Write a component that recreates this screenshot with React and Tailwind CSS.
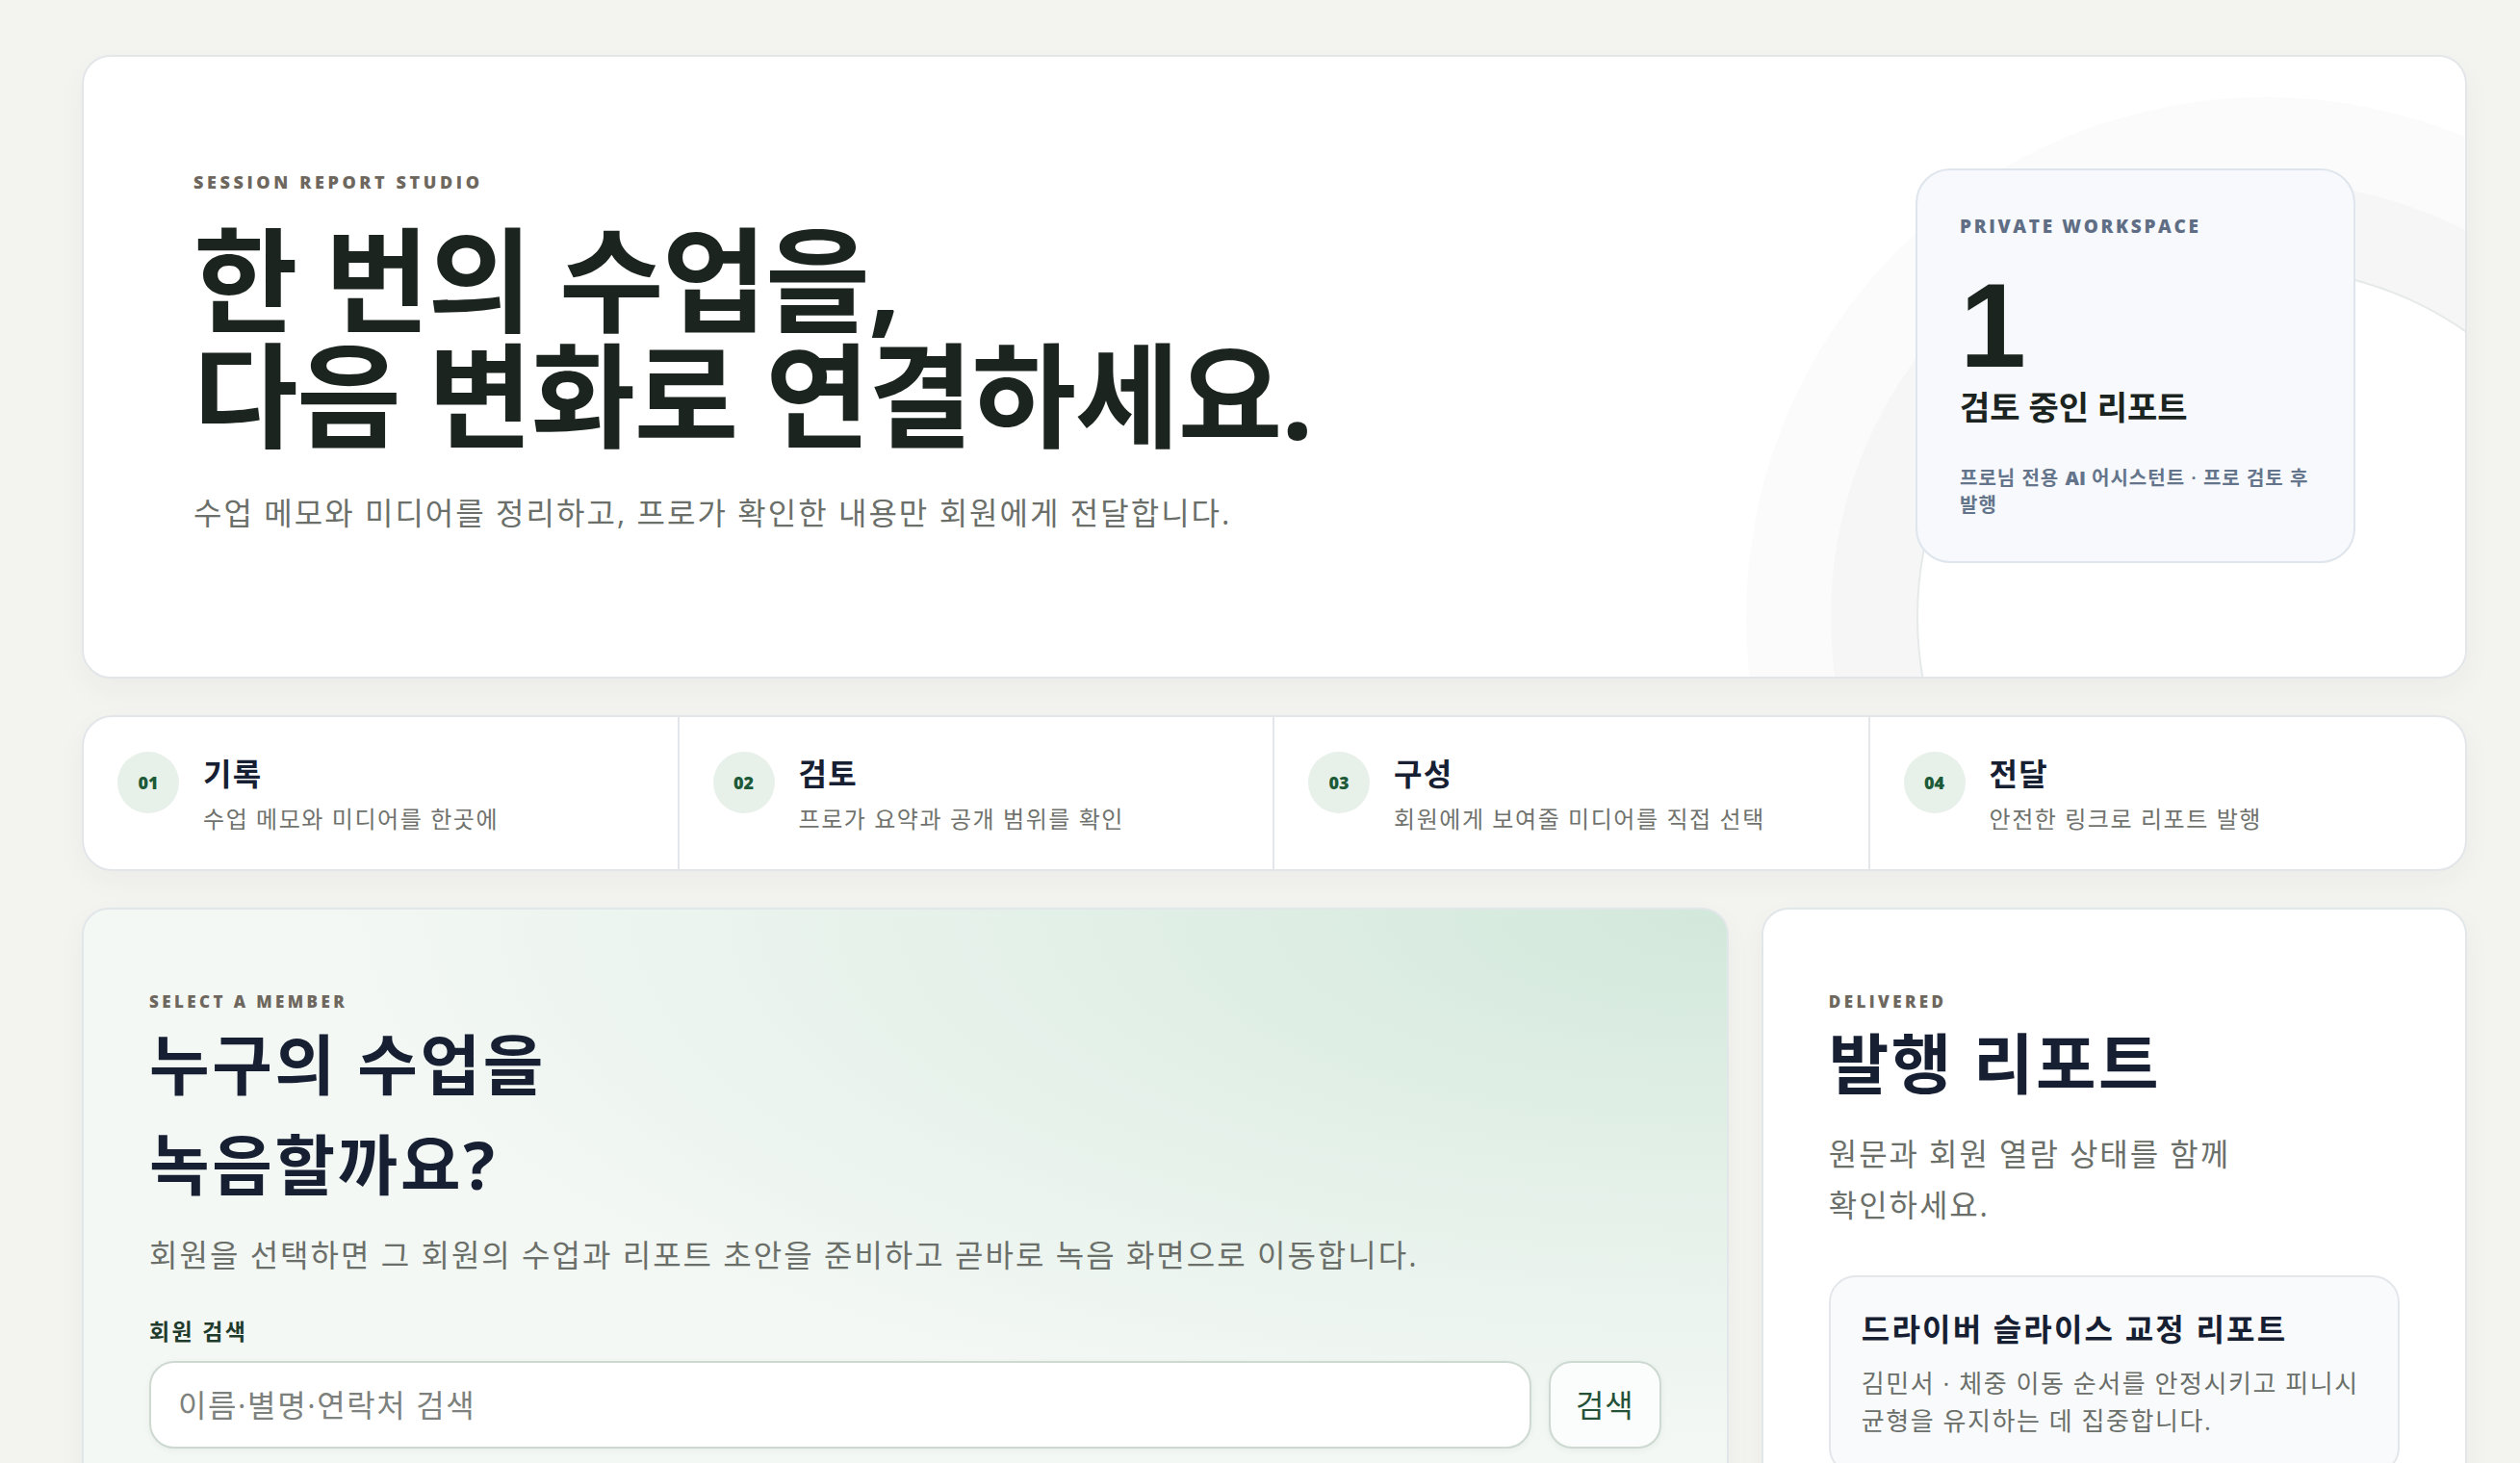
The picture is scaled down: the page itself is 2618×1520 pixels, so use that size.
import React from "react"

const steps = [
  { no: "01", title: "기록", desc: "수업 메모와 미디어를 한곳에" },
  { no: "02", title: "검토", desc: "프로가 요약과 공개 범위를 확인" },
  { no: "03", title: "구성", desc: "회원에게 보여줄 미디어를 직접 선택" },
  { no: "04", title: "전달", desc: "안전한 링크로 리포트 발행" },
]

function Eyebrow({ children, className = "" }) {
  return <p className={`font-extrabold uppercase ${className}`}>{children}</p>
}

function Hero() {
  return (
    <section className="relative overflow-hidden rounded-[30px] border-2 border-[#e3e6e9] bg-white shadow-[0_12px_30px_rgba(40,50,40,0.04)]">
      {/* background rings */}
      <div className="absolute left-[1727px] top-[42px] flex h-[1080px] w-[1080px] items-center justify-center rounded-full bg-[#fafbfa]">
        <div className="flex h-[904px] w-[904px] items-center justify-center rounded-full bg-[#f5f6f5]">
          <div className="h-[726px] w-[726px] rounded-full border-2 border-[#e6e9ea] bg-white" />
        </div>
      </div>

      <div className="relative flex items-start justify-between px-[114px] pb-[118px] pt-[116px]">
        <div>
          <Eyebrow className="text-[18px] leading-[28px] tracking-[0.2em] text-[#6e675e]">Session Report Studio</Eyebrow>
          <h1 className="mt-[28px] text-[118px] font-bold leading-[120px] tracking-[-0.012em] text-[#1b241e]">
            한 번의 수업을,
            <br />
            다음 변화로 연결하세요.
          </h1>
          <p className="mt-[36px] text-[32px] leading-[52px] tracking-[0.063em] text-[#6b6f6a]">
            수업 메모와 미디어를 정리하고, 프로가 확인한 내용만 회원에게 전달합니다.
          </p>
        </div>

        <aside className="w-[457px] rounded-[36px] border-2 border-[#dfe5ec] bg-[#f7f9fc] px-[44px] py-[44px]">
          <Eyebrow className="text-[19px] leading-[28px] tracking-[0.14em] text-[#5f6e85]">Private Workspace</Eyebrow>
          <div className="mt-[27px] font-['Liberation_Sans',Arial,sans-serif] text-[124px] font-bold leading-none text-[#1b241e]">
            1
          </div>
          <div className="text-[34px] font-semibold leading-[46px] tracking-normal text-[#1b2420]">검토 중인 리포트</div>
          <p className="mt-[37px] text-[20px] font-semibold leading-[28px] tracking-[0.05em] text-[#64748b]">
            프로님 전용 <span className="font-extrabold tracking-normal">AI</span> 어시스턴트 · 프로 검토 후 발행
          </p>
        </aside>
      </div>
    </section>
  )
}

function Steps() {
  return (
    <section className="mt-[38px] grid grid-cols-4 divide-x-2 divide-[#e3e6ea] overflow-hidden rounded-[32px] border-2 border-[#e3e6e9] bg-white shadow-[0_10px_30px_rgba(40,50,40,0.04)]">
      {steps.map((s) => (
        <div key={s.no} className="flex items-start gap-[25px] px-[35px] pb-[34px] pt-[36px]">
          <div className="flex h-16 w-16 shrink-0 items-center justify-center rounded-full bg-[#e8f0ea] text-[18px] font-extrabold text-[#1d5a38]">
            {s.no}
          </div>
          <div className="pt-[3px]">
            <h3 className="text-[32px] font-bold leading-[40px] tracking-[0.04em] text-[#172033]">{s.title}</h3>
            <p className="mt-[9px] text-[24px] leading-[36px] tracking-[0.065em] text-[#6f726d]">{s.desc}</p>
          </div>
        </div>
      ))}
    </section>
  )
}

function MemberSearch() {
  return (
    <section className="rounded-[28px] border-2 border-[#e1e6e8] bg-[#f4f8f5] bg-[radial-gradient(ellipse_at_100%_0%,#d2e8da_0%,rgba(214,234,222,0.55)_30%,rgba(244,248,245,0)_62%)] px-[68px] pb-[90px] pt-[84px] shadow-[0_10px_30px_rgba(40,50,40,0.04)]">
      <Eyebrow className="text-[17px] leading-[24px] tracking-[0.2em] text-[#6e675e]">Select a member</Eyebrow>
      <h2 className="mt-[1px] max-w-[560px] text-[68px] font-bold leading-[104px] tracking-[0.04em] text-[#172033]">
        누구의 수업을 녹음할까요?
      </h2>
      <p className="mt-[15px] text-[32px] leading-[54px] tracking-[0.0625em] text-[#6b6f6a]">
        회원을 선택하면 그 회원의 수업과 리포트 초안을 준비하고 곧바로 녹음 화면으로 이동합니다.
      </p>
      <label className="mt-[37px] block text-[23px] font-bold leading-[30px] tracking-[0.1em] text-[#1f3b2c]">회원 검색</label>
      <div className="mt-[16px] flex gap-[18px]">
        <input
          type="text"
          placeholder="이름·별명·연락처 검색"
          className="h-[91px] flex-1 rounded-[26px] border-2 border-[#cdd9d1] bg-white px-[28px] text-[32px] tracking-[0.05em] text-[#1b241e] shadow-[0_2px_6px_rgba(40,60,40,0.06)] outline-none placeholder:text-[#7d817d]"
        />
        <button className="h-[91px] w-[117px] rounded-[24px] border-2 border-[#cdd9d1] bg-[#fbfdfc] text-[32px] tracking-[0.03em] text-[#245038] shadow-[0_2px_6px_rgba(40,60,40,0.06)]">
          검색
        </button>
      </div>
    </section>
  )
}

function Delivered() {
  return (
    <section className="rounded-[28px] border-2 border-[#e1e6e8] bg-white px-[68px] pb-[70px] pt-[84px] shadow-[0_10px_30px_rgba(40,50,40,0.04)]">
      <Eyebrow className="text-[17px] leading-[24px] tracking-[0.2em] text-[#6e675e]">Delivered</Eyebrow>
      <h2 className="mt-[1px] text-[68px] font-bold leading-[102px] tracking-[0.036em] text-[#172033]">발행 리포트</h2>
      <p className="mt-[16px] max-w-[500px] text-[32px] leading-[53px] tracking-[0.06em] text-[#6b6f6a]">
        원문과 회원 열람 상태를 함께 확인하세요.
      </p>
      <div className="mt-[47px] rounded-[28px] border-2 border-[#e3e7eb] bg-[#f8fafb] px-[32px] pb-[34px] pt-[33px]">
        <h3 className="text-[32px] font-semibold leading-[42px] tracking-[0.068em] text-[#172033]">드라이버 슬라이스 교정 리포트</h3>
        <p className="mt-[16px] text-[26px] leading-[39px] tracking-[0.06em] text-[#6b6f6a]">
          김민서 · 체중 이동 순서를 안정시키고 피니시 균형을 유지하는 데 집중합니다.
        </p>
      </div>
    </section>
  )
}

export default function App() {
  return (
    <div className="min-h-screen break-keep bg-[#f3f3f0] pb-[80px] pl-[85px] pr-[55px] pt-[57px] font-['Open_Sans','Noto_Sans_CJK_KR',sans-serif]">
      <Hero />
      <Steps />
      <div className="mt-[38px] grid grid-cols-[7fr_3fr] items-stretch gap-[34px]">
        <MemberSearch />
        <Delivered />
      </div>
    </div>
  )
}
